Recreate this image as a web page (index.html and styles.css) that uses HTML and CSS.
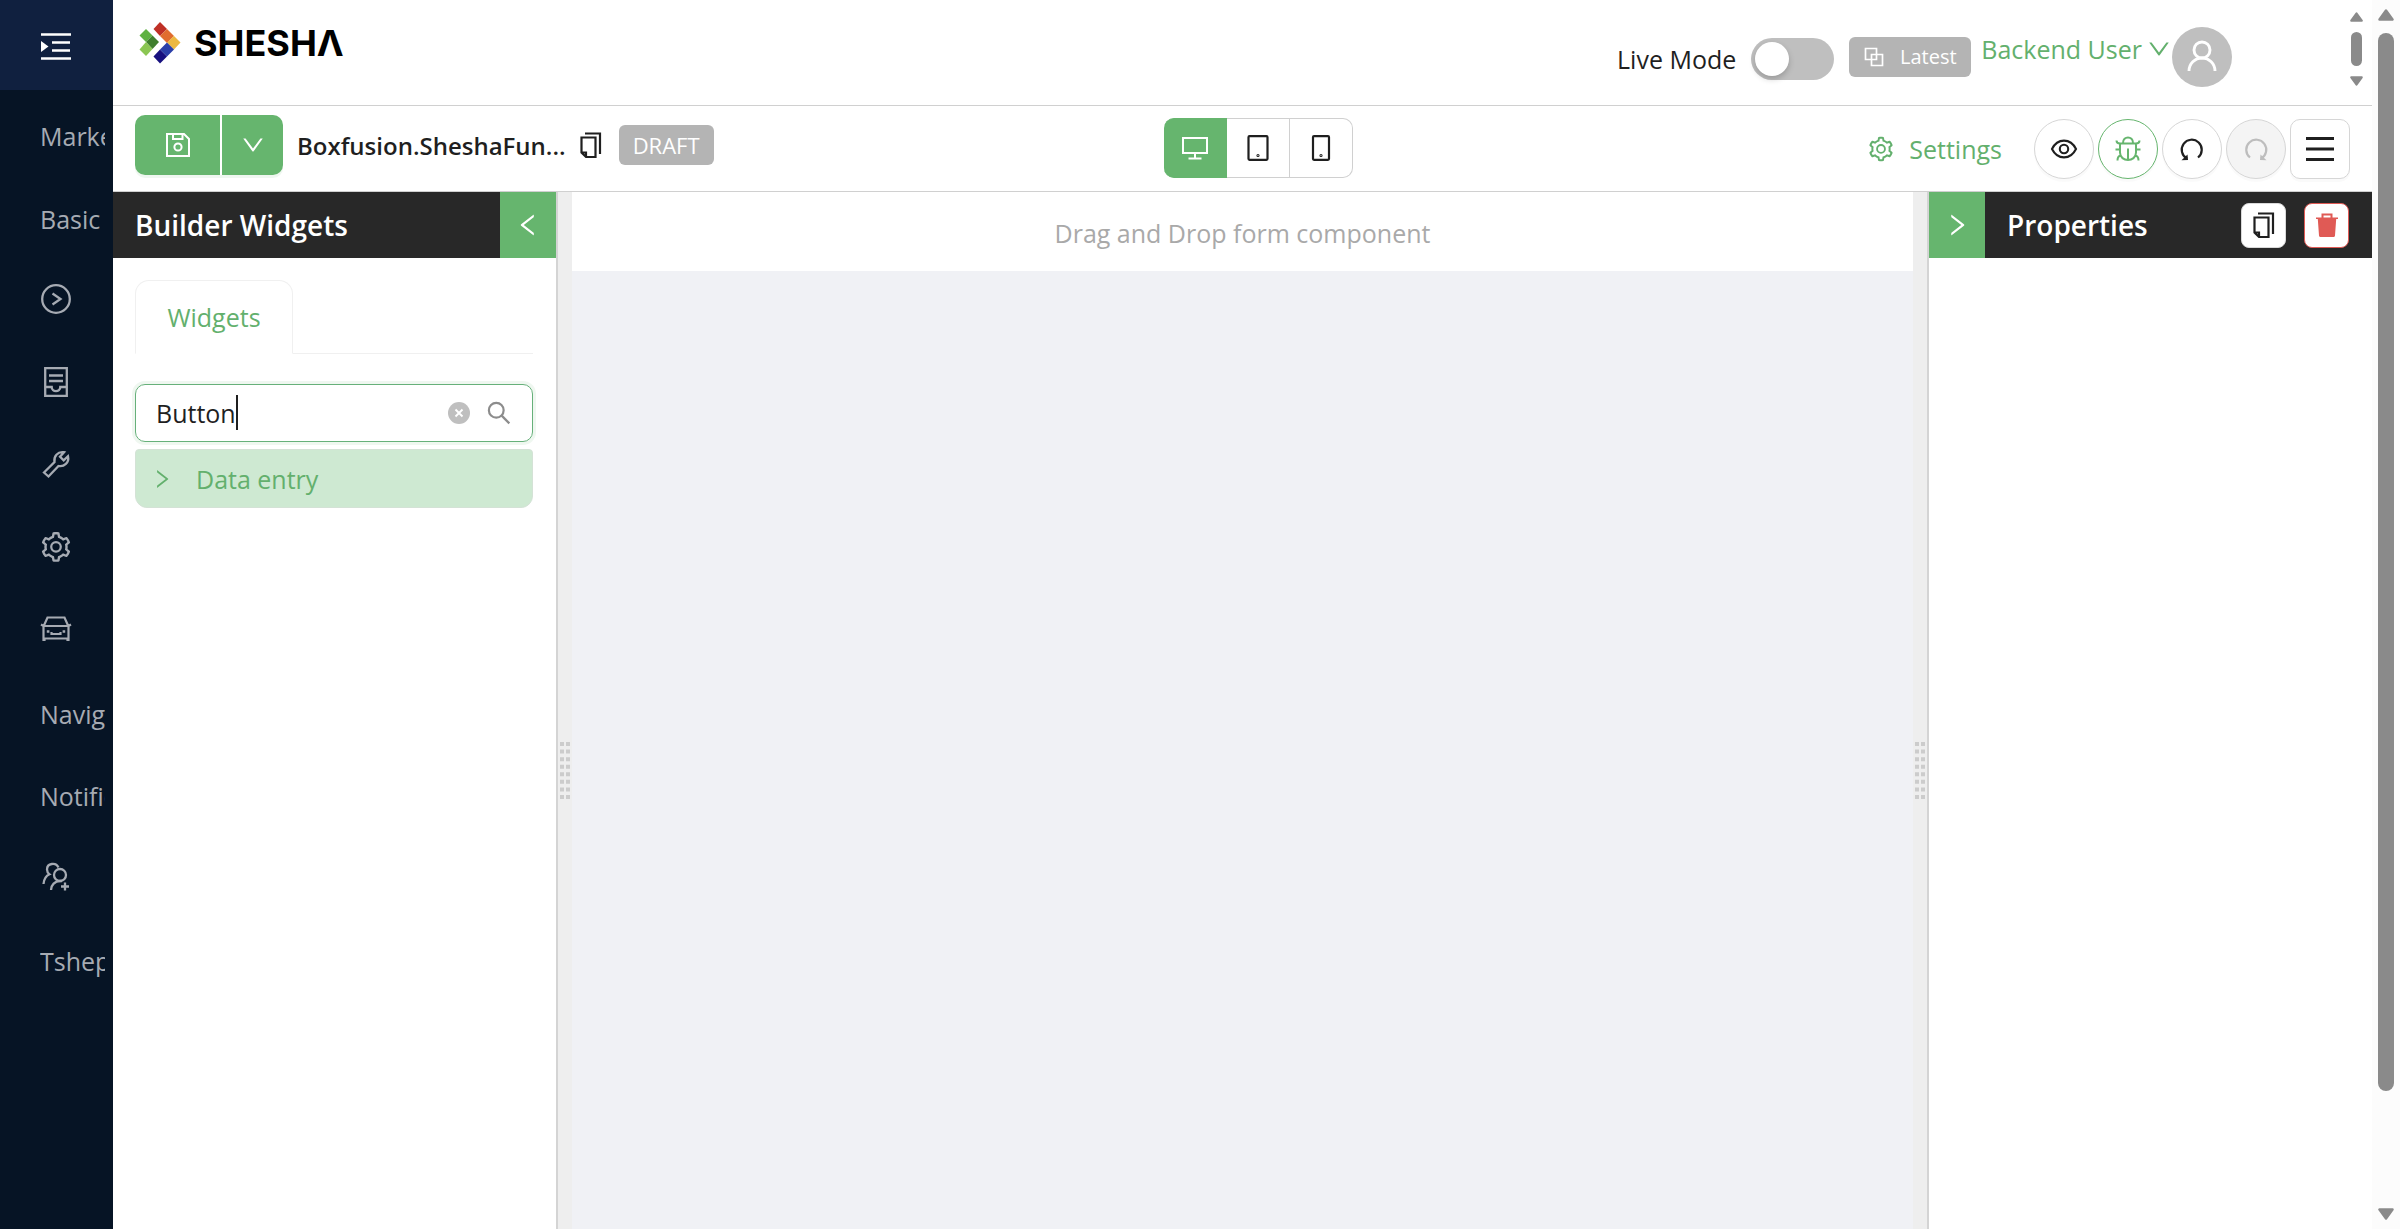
FILE: index.html
```html
<!DOCTYPE html>
<html lang="en">
<head>
    <meta charset="utf-8">
    <title>Shesha form designer</title>
    <link rel="stylesheet" href="styles.css">
</head>
<body>
    <svg class="sprite" aria-hidden="true">
        <symbol id="i-gear" viewBox="0 0 1024 1024"><path d="M924.8 625.7l-65.5-56c3.1-19 4.7-38.4 4.7-57.8s-1.6-38.8-4.7-57.8l65.5-56a32.03 32.03 0 009.3-35.2l-.9-2.6a443.74 443.74 0 00-79.7-137.9l-1.8-2.1a32.12 32.12 0 00-35.1-9.5l-81.3 28.9c-30-24.6-63.5-44-99.7-57.6l-15.7-85a32.05 32.05 0 00-25.8-25.7l-2.7-.5c-52.1-9.4-106.9-9.4-159 0l-2.7.5a32.05 32.05 0 00-25.8 25.7l-15.8 85.4a351.86 351.86 0 00-99 57.4l-81.9-29.1a32 32 0 00-35.1 9.5l-1.8 2.1a446.02 446.02 0 00-79.7 137.9l-.9 2.6c-4.5 12.5-.8 26.5 9.3 35.2l66.3 56.6c-3.1 18.8-4.6 38-4.6 57.1 0 19.2 1.5 38.4 4.6 57.1L99 625.5a32.03 32.03 0 00-9.3 35.2l.9 2.6c18.1 50.4 44.9 96.9 79.7 137.9l1.8 2.1a32.12 32.12 0 0035.1 9.5l81.9-29.1c29.8 24.5 63.1 43.9 99 57.4l15.8 85.4a32.05 32.05 0 0025.8 25.7l2.7.5a449.4 449.4 0 00159 0l2.7-.5a32.05 32.05 0 0025.8-25.7l15.7-85a350 350 0 0099.7-57.6l81.3 28.9a32 32 0 0035.1-9.5l1.8-2.1c34.8-41.1 61.6-87.5 79.7-137.9l.9-2.6c4.5-12.3.8-26.3-9.3-35zM788.3 465.9c2.5 15.1 3.8 30.6 3.8 46.1s-1.3 31-3.8 46.1l-6.6 40.1 74.7 63.9a370.03 370.03 0 01-42.6 73.6L721 702.8l-31.4 25.8c-23.9 19.6-50.5 35-79.3 45.8l-38.1 14.3-17.9 97a377.5 377.5 0 01-85 0l-17.9-97.2-37.8-14.5c-28.5-10.8-55-26.2-78.7-45.7l-31.4-25.9-93.4 33.2c-17-22.9-31.2-47.6-42.6-73.6l75.5-64.5-6.5-40c-2.4-14.9-3.7-30.3-3.7-45.5 0-15.3 1.2-30.6 3.7-45.5l6.5-40-75.5-64.5c11.3-26.1 25.6-50.7 42.6-73.6l93.4 33.2 31.4-25.9c23.7-19.5 50.2-34.9 78.7-45.7l37.9-14.3 17.9-97.2c28.1-3.2 56.8-3.2 85 0l17.9 97 38.1 14.3c28.7 10.8 55.4 26.2 79.3 45.8l31.4 25.8 92.8-32.9c17 22.9 31.2 47.6 42.6 73.6L781.8 426l6.5 39.9z" fill="currentColor" fill-rule="evenodd"/><circle cx="512" cy="508" r="144" fill="none" stroke="currentColor" stroke-width="68"/></symbol>
        <symbol id="i-down" viewBox="0 0 1024 1024"><path fill="currentColor" d="M884 256h-75c-5.1 0-9.9 2.5-12.9 6.6L512 654.2 227.9 262.6c-3-4.1-7.8-6.6-12.9-6.6h-75c-6.5 0-10.3 7.4-6.5 12.7l352.6 486.1c12.8 17.6 39 17.6 51.7 0l352.6-486.1c3.9-5.3.1-12.7-6.4-12.7z"/></symbol>
        <symbol id="i-right" viewBox="0 0 1024 1024"><path fill="currentColor" d="M765.7 486.8L314.9 134.7A7.97 7.97 0 00302 141v77.3c0 4.9 2.3 9.6 6.1 12.6l360 281.1-360 281.1c-3.9 3-6.1 7.7-6.1 12.6V883c0 6.7 7.7 10.4 12.9 6.3l450.8-352.1a31.96 31.96 0 000-50.4z"/></symbol>
        <symbol id="i-left" viewBox="0 0 1024 1024"><path fill="currentColor" d="M724 218.3V141c0-6.7-7.7-10.4-12.9-6.3L260.3 486.8a31.86 31.86 0 000 50.3l450.8 352.1c5.3 4.1 12.9.4 12.9-6.3v-77.3c0-4.9-2.3-9.6-6.1-12.6l-360-281 360-281.1c3.8-3 6.1-7.7 6.1-12.6z"/></symbol>
        <symbol id="i-search" viewBox="0 0 1024 1024"><circle cx="412" cy="412" r="270" fill="none" stroke="currentColor" stroke-width="80"/><path d="M610 610l280 280" stroke="currentColor" stroke-width="84"/></symbol>
        <symbol id="i-copy" viewBox="0 0 28 28"><path d="M4.500 6.500h14v19.500h-9.500l-4.500-4.500zM4.500 21.500H9V26M8 2.500h15v20.500" fill="none" stroke="currentColor" stroke-width="2.200"/></symbol>
        <symbol id="i-undo" viewBox="0 0 28 28"><path d="M9 23.500A10 10 0 1 1 20 22.500" fill="none" stroke="currentColor" stroke-width="2.200"/><path d="M9.500 19.500l.5 5.500-6.500.2z" fill="currentColor"/></symbol>
        <symbol id="i-user" viewBox="0 0 36 36"><g fill="none" stroke="currentColor" stroke-width="2.900"><circle cx="18" cy="11" r="8"/><path d="M5 32a13 13 0 0 1 26 0"/></g></symbol>
        <symbol id="i-grip" viewBox="0 0 10 57"><path d="M2 0v57M8 0v57" stroke="currentColor" stroke-width="4" stroke-dasharray="4 3.570"/></symbol>
        <symbol id="i-arrow" viewBox="0 0 16 12"><path d="M8 1.500L14.500 10.500H1.500z" fill="currentColor" stroke="currentColor" stroke-width="2.500" stroke-linejoin="round"/></symbol>
    </svg>

    <div class="app">
        <nav class="sider">
            <button class="sider-toggle" aria-label="Expand menu">
                <svg class="icon-lg" viewBox="0 0 34 34"><path d="M2 5.500h30M13 13.500h18M13 21.500h18M2 29.500h30" stroke="currentColor" stroke-width="2.600"/><path d="M2 12l7.500 5.500L2 23z" fill="currentColor"/></svg>
            </button>
            <ul class="menu">
                <li><a href="#">Marketing</a></li>
                <li><a href="#">Basic</a></li>
                <li><a href="#" aria-label="Workflows" class="menu-icon"><svg class="icon-lg" viewBox="0 0 34 34" fill="none" stroke="currentColor" stroke-width="2.300"><circle cx="17" cy="17" r="13.800"/><path d="M13.500 11.500l8 5.500-8 5.500"/></svg></a></li>
                <li><a href="#" aria-label="Records" class="menu-icon"><svg class="icon-lg" viewBox="0 0 34 34" fill="none" stroke="currentColor" stroke-width="2.300"><path d="M6.200 3.200h21.600v27.600H6.200zM10 10.500h14M10 16h14M6.200 22h6.500c0 5.500 8.600 5.500 8.600 0h6.500"/></svg></a></li>
                <li><a href="#" aria-label="Configuration" class="menu-icon"><svg class="icon-lg" viewBox="0 0 34 34" fill="none" stroke="currentColor" stroke-width="2.300"><path d="M5 25.500l10.500-10.500c-1-5.500 3-10.800 9.500-9.800l-4 4.500 3.700 3.700 4.300-4.200c1.500 6.300-4 11-9.500 9.800L9.500 29.500z"/></svg></a></li>
                <li><a href="#" aria-label="Administration" class="menu-icon"><svg class="icon-lg"><use href="#i-gear"/></svg></a></li>
                <li><a href="#" aria-label="Vehicles" class="menu-icon"><svg class="icon-lg" viewBox="0 0 34 34" fill="none" stroke="currentColor" stroke-width="2.200"><path d="M4.500 29V14.500l4-9h17l4 9V29M4.500 26.500h25M5.500 14h23M2 12.500l3.500 2M32 12.500l-3.500 2M5.500 29v-2M28.500 29v-2M12.500 20v2h9v-2"/><path d="M7.800 19.500h2.600M23.600 19.500h2.600" stroke-width="2.600"/></svg></a></li>
                <li><a href="#">Navigation</a></li>
                <li><a href="#">Notifications</a></li>
                <li><a href="#" aria-label="User management" class="menu-icon"><svg class="icon-lg" viewBox="0 0 34 34" fill="none" stroke="currentColor" stroke-width="2.300"><circle cx="21" cy="15" r="6"/><path d="M19.500 7.500C17 2 8 3 8 9.500c0 2 .8 3.500 2.500 4.800C6.500 16 5 19 4.500 24M12 30c0-5 4-9 9-9h2M26 22.500v8M22 26.500h8"/></svg></a></li>
                <li><a href="#">Tshepo</a></li>
            </ul>
        </nav>

        <main class="main">
            <header class="header">
                <a href="#" class="logo">
                    <svg class="logo-mark" viewBox="0 0 42 42" aria-hidden="true">
                        <path d="M7 7l6.500 6.500L7 20 .5 13.500z" fill="#5fb142"/><path d="M13.500 13.500L20 20l-6.500 7L7 20z" fill="#3f7e2d"/><path d="M7 20l6.500 7L7 34 .5 27.500z" fill="#8bc653"/>
                        <path d="M21 0l7 7-7 7-6.500-7z" fill="#bf3026"/><path d="M28 7l7 7-7 7-7-7z" fill="#e06c2f"/><path d="M35 14l6.500 6.500L35 27.500l-7-7z" fill="#ecb841"/><path d="M28 20.500l7 7-7 7-7-7z" fill="#2b3fa8"/><path d="M21 27.500l7 7-7 7-6.500-7z" fill="#17107f"/>
                    </svg>
                    <span>SHESHΛ</span>
                </a>
                <div class="header-right">
                    <label for="live">Live Mode</label>
                    <input type="checkbox" id="live" class="switch">
                    <span class="tag tag-latest"><svg class="icon-sm" viewBox="0 0 20 20" fill="none" stroke="currentColor" stroke-width="1.700"><path d="M1.500 1.500h11v11h-11zM7.500 7.500h11v11h-11z"/></svg>Latest</span>
                    <a href="#" class="user">Backend User <svg class="icon-md"><use href="#i-down"/></svg></a>
                    <span class="avatar"><svg><use href="#i-user"/></svg></span>
                </div>
                <div class="header-scroll">
                    <svg><use href="#i-arrow"/></svg>
                    <span class="thumb"></span>
                    <svg class="flip"><use href="#i-arrow"/></svg>
                </div>
            </header>

            <div class="toolbar">
                <div class="toolbar-left">
                    <div class="save-group">
                        <button class="save" aria-label="Save"><svg class="icon-md" viewBox="0 0 26 26" fill="none" stroke="currentColor" stroke-width="2"><path d="M2 2h17l5 5v17H2zM8 2v5h9.500V2"/><circle cx="13" cy="15" r="3.600"/></svg></button>
                        <button class="save-more" aria-label="More save options"><svg class="icon-md"><use href="#i-down"/></svg></button>
                    </div>
                    <span class="form-name">Boxfusion.SheshaFun...</span>
                    <button class="copy-name" aria-label="Copy name"><svg class="icon"><use href="#i-copy"/></svg></button>
                    <span class="tag tag-draft">DRAFT</span>
                </div>
                <div class="devices">
                    <button class="active" aria-label="Desktop"><svg class="icon" viewBox="0 0 28 28" fill="none" stroke="currentColor" stroke-width="2"><path d="M2 4h24v15H2zM14 19v5M7.500 24.500h13"/></svg></button>
                    <button aria-label="Tablet"><svg class="icon" viewBox="0 0 28 28" fill="none" stroke="currentColor" stroke-width="2.200"><rect x="4.500" y="2.200" width="19" height="23.600" rx="1"/><circle cx="14" cy="21.500" r=".5"/></svg></button>
                    <button aria-label="Mobile"><svg class="icon" viewBox="0 0 28 28" fill="none" stroke="currentColor" stroke-width="2.200"><rect x="6" y="2.200" width="16" height="23.600" rx="1"/><circle cx="14" cy="21.500" r=".5"/></svg></button>
                </div>
                <div class="toolbar-right">
                    <a href="#" class="settings"><svg class="icon"><use href="#i-gear"/></svg>Settings</a>
                    <button class="round" aria-label="Preview"><svg class="icon" viewBox="0 0 28 28" fill="none" stroke="currentColor" stroke-width="2.100"><path d="M2 14C7.500 2.800 20.500 2.800 26 14 20.500 25.200 7.500 25.200 2 14z"/><circle cx="14" cy="14" r="4.200"/></svg></button>
                    <button class="round debug" aria-label="Debug"><svg class="icon" viewBox="0 0 28 28" fill="none" stroke="currentColor" stroke-width="2"><path d="M6 8.500h16v9c0 10-16 10-16 0zM9 8c0-7.500 10-7.500 10 0M14 13.500v12M1.500 14.500H6M22 14.500h4.500M2.500 5.500c0 2 1.500 3 3.500 3M25.500 5.500c0 2-1.500 3-3.500 3M3.500 25.500c0-3 1-4.500 3-5M24.500 25.500c0-3-1-4.500-3-5"/></svg></button>
                    <button class="round" aria-label="Undo"><svg class="icon"><use href="#i-undo"/></svg></button>
                    <button class="round" aria-label="Redo" disabled><svg class="icon flip-x"><use href="#i-undo"/></svg></button>
                    <button class="round square" aria-label="Menu"><svg class="icon" viewBox="0 0 28 28"><path d="M0 3.500h28M0 14h28M0 24.500h28" stroke="currentColor" stroke-width="2.800"/></svg></button>
                </div>
            </div>

            <div class="designer">
                <section class="panel panel-left">
                    <div class="panel-head">
                        <h2>Builder Widgets</h2>
                        <button class="collapse-btn" aria-label="Collapse widgets"><svg class="icon"><use href="#i-left"/></svg></button>
                    </div>
                    <div class="panel-body">
                        <div class="tabs"><button class="tab" role="tab" aria-selected="true">Widgets</button></div>
                        <div class="search">
                            <input type="text" value="Button" aria-label="Search widgets">
                            <span class="caret"></span>
                            <button aria-label="Clear"><svg class="icon-clear" viewBox="0 0 22 22"><circle cx="11" cy="11" r="11" fill="#bfbfbf"/><path d="M7.500 7.500l7 7M14.500 7.500l-7 7" stroke="#fff" stroke-width="1.900"/></svg></button>
                            <button aria-label="Search"><svg class="icon"><use href="#i-search"/></svg></button>
                        </div>
                        <button class="group" aria-expanded="false"><svg class="icon-arrow"><use href="#i-right"/></svg>Data entry</button>
                    </div>
                </section>

                <div class="gutter gutter-left"><svg><use href="#i-grip"/></svg></div>
                <section class="canvas">
                    <div class="drop-zone">Drag and Drop form component</div>
                </section>
                <div class="gutter gutter-right"><svg><use href="#i-grip"/></svg></div>

                <section class="panel panel-right">
                    <div class="panel-head">
                        <button class="collapse-btn" aria-label="Collapse properties"><svg class="icon"><use href="#i-right"/></svg></button>
                        <h2>Properties</h2>
                        <button class="head-btn" aria-label="Copy"><svg class="icon"><use href="#i-copy"/></svg></button>
                        <button class="head-btn danger" aria-label="Delete"><svg class="icon" viewBox="0 0 28 28"><path d="M3 8V6.500h5.500V2.500h11v4H25V8h-1.800L22 24.500c0 .8-.6 1.500-1.500 1.500h-13c-.8 0-1.500-.7-1.500-1.500L4.800 8zM10.500 4.500v2h7v-2z" fill="currentColor" fill-rule="evenodd"/></svg></button>
                    </div>
                </section>
            </div>
        </main>

        <div class="page-scroll">
            <svg><use href="#i-arrow"/></svg>
            <div class="track"><div class="thumb"></div></div>
            <svg class="flip"><use href="#i-arrow"/></svg>
        </div>
    </div>
</body>
</html>
```

FILE: styles.css
```css
* { margin: 0; padding: 0; box-sizing: border-box; }
body { font: 25px/36px "Segoe UI", "Open Sans", "Noto Sans", sans-serif; color: #1f1f1f; background: #fff; }
button, input { font: inherit; color: inherit; border: 0; background: none; outline: 0; }
a { color: inherit; text-decoration: none; }
svg { display: block; flex: none; }
ul { list-style: none; }

.sprite { position: absolute; width: 0; height: 0; }
.icon { width: 28px; height: 28px; }
.icon-lg { width: 34px; height: 34px; }
.icon-md { width: 26px; height: 26px; }
.icon-sm { width: 20px; height: 20px; }
.icon-arrow { width: 24px; height: 24px; }
.icon-clear { width: 22px; height: 22px; }
.flip { transform: rotate(180deg); }
.flip-x { transform: scaleX(-1); }

.app { display: flex; height: 100vh; overflow: hidden; }

/* sider */
.sider { width: 113px; flex: none; background: #061425; color: #a6abb3; }
.sider-toggle { display: flex; align-items: center; width: 100%; height: 90px; padding: 2px 0 0 39px; background: #10203f; color: #fff; }
.menu { display: grid; grid-auto-rows: 82px 83px; padding: 5px 8px 0 40px; }
.menu li { display: flex; align-items: center; overflow: hidden; }
.menu-icon { margin: 0 0 4px -1px; }

.main { flex: 1; min-width: 0; display: flex; flex-direction: column; }

/* header */
.header { display: flex; align-items: flex-start; height: 106px; border-bottom: 1px solid #d0d0d0; padding-left: 26px; }
.logo { display: flex; align-items: center; gap: 13px; padding-top: 22px; color: #000; font: 700 36px/42px Inter, sans-serif; }
.logo-mark { width: 42px; height: 42px; }
.header-right { display: flex; align-items: center; height: 60px; margin: 27px 116px 0 auto; }
.switch { appearance: none; width: 83px; height: 42px; margin: 4px 15px 0; padding: 4px; border-radius: 21px; background: #bfbfbf; }
.switch::before { content: ""; display: block; width: 34px; height: 34px; border-radius: 50%; background: #fff; box-shadow: 0 3px 6px rgba(0, 0, 0, .2); }
.header-right label { padding-top: 4px; }
.tag { display: flex; align-items: center; justify-content: center; height: 40px; border-radius: 6px; background: #b4b4b4; color: #fff; font-size: 22px; }
.tag-latest { gap: 16px; width: 122px; font-size: 20px; }
.user { display: flex; align-items: center; gap: 4px; margin: 0 0 16px 10px; color: #63b06d; }
.avatar { display: flex; align-items: center; justify-content: center; width: 60px; height: 60px; border-radius: 50%; background: #bfbfbf; color: #fff; }
.avatar svg { width: 36px; height: 36px; }
.header-scroll { display: flex; flex-direction: column; align-items: center; justify-content: space-between; width: 16px; height: 74px; margin: 12px 8px 0 0; color: #8a8a8a; }
.header-scroll svg { width: 13px; height: 10px; }
.header-scroll .thumb { width: 11px; height: 34px; border-radius: 6px; background: #8a8a8a; }

/* toolbar */
.toolbar { display: grid; grid-template-columns: 1fr auto 1fr; height: 86px; padding: 9px 22px 0; border-bottom: 1px solid #d0d0d0; }
.toolbar-left, .toolbar-right { display: flex; align-items: flex-start; }
.toolbar button { display: flex; align-items: center; justify-content: center; }
.save-group { display: flex; gap: 2px; border-radius: 10px; box-shadow: 0 3px 0 rgba(101, 181, 109, .1); }
.save-group button { height: 60px; background: #66b56e; color: #fff; }
.save { width: 85px; border-radius: 10px 0 0 10px; }
.save-more { width: 61px; border-radius: 0 10px 10px 0; }
.form-name { padding: 13px 0 0 14px; font-weight: 600; font-size: 24px; }
.copy-name { height: 60px; margin: 0 14px 0 11px; }
.tag-draft { width: 95px; margin-top: 10px; }
.devices { display: flex; margin-left: 32px; padding-top: 3px; }
.devices button { width: 63px; height: 60px; border: 1px solid #d0d0d0; border-left-width: 0; }
.devices button:last-child { border-radius: 0 10px 10px 0; }
.devices .active { background: #66b56e; border-color: #66b56e; color: #fff; border-radius: 10px 0 0 10px; }
.toolbar-right { justify-content: flex-end; gap: 4px; padding-top: 4px; }
.settings { display: flex; align-items: center; gap: 14px; height: 60px; margin-right: 28px; color: #63b06d; }
.round { width: 60px; height: 60px; border: 1px solid #d6d6d6; border-radius: 50%; background: #fff; box-shadow: 0 3px 0 rgba(0, 0, 0, .02); }
.round.debug { border-color: #66b56e; color: #66b56e; }
.round:disabled { background: #f4f4f4; color: #bdbdbd; }
.round.square { border-radius: 10px; }

/* designer */
.designer { display: flex; flex: 1; min-height: 0; }
.panel { flex: none; width: 443px; }
.panel-head { display: flex; align-items: center; height: 66px; background: #282828; color: #fff; }
.panel-head h2 { flex: 1; padding-left: 22px; font-size: 28px; font-weight: 600; line-height: 36px; }
.collapse-btn { display: flex; align-items: center; justify-content: center; width: 56px; height: 66px; background: #66b56e; color: #fff; }
.head-btn { display: flex; align-items: center; justify-content: center; width: 45px; height: 45px; margin-right: 18px; border: 1px solid #d9d9d9; border-radius: 8px; background: #fff; color: #1f1f1f; }
.head-btn.danger { margin-right: 23px; border-color: #e05a55; color: #e05a55; }
.panel-body { padding: 22px 23px 22px 22px; }
.tabs { display: flex; border-bottom: 1px solid #f0f0f0; }
.tab { width: 158px; height: 74px; margin-bottom: -1px; border: 1px solid #f0f0f0; border-bottom-color: #fff; border-radius: 14px 14px 0 0; background: #fff; color: #63b06d; }
.search { position: relative; display: flex; align-items: center; gap: 15px; height: 58px; margin-top: 30px; padding: 0 19px 0 20px; border: 1px solid #66b07a; border-radius: 10px; box-shadow: 0 0 0 3px rgba(101, 181, 109, .1); color: #8c8c8c; }
.search input { flex: 1; min-width: 0; color: #1f1f1f; }
.caret { position: absolute; top: 10px; left: 100px; width: 2px; height: 35px; background: #1f1f1f; }
.group { display: flex; align-items: center; gap: 22px; width: 100%; height: 59px; margin-top: 7px; padding-left: 14px; border: 1px solid #d4e2d6; border-radius: 4px 4px 12px 12px; background: #cee9d2; color: #63b06d; }

.gutter { display: flex; align-items: center; flex: none; width: 16px; padding-top: 120px; background: #eee; color: #ccc; }
.gutter svg { width: 10px; height: 57px; margin: 0 auto 0 2px; }
.gutter-left { border-left: 2px solid #d4d4d4; }
.gutter-right { border-right: 2px solid #d4d4d4; }
.canvas { flex: 1; background: #f0f1f5; }
.drop-zone { display: flex; align-items: center; justify-content: center; height: 79px; padding-top: 2px; background: #fff; color: #a9a9a9; }

/* page scrollbar */
.page-scroll { display: flex; flex-direction: column; align-items: center; gap: 12px; flex: none; width: 28px; padding: 9px 0; background: #fcfcfc; color: #8a8a8a; }
.page-scroll svg { width: 16px; height: 12px; }
.track { flex: 1; width: 16px; }
.track .thumb { height: 91%; border-radius: 8px; background: #8a8a8a; }
```
